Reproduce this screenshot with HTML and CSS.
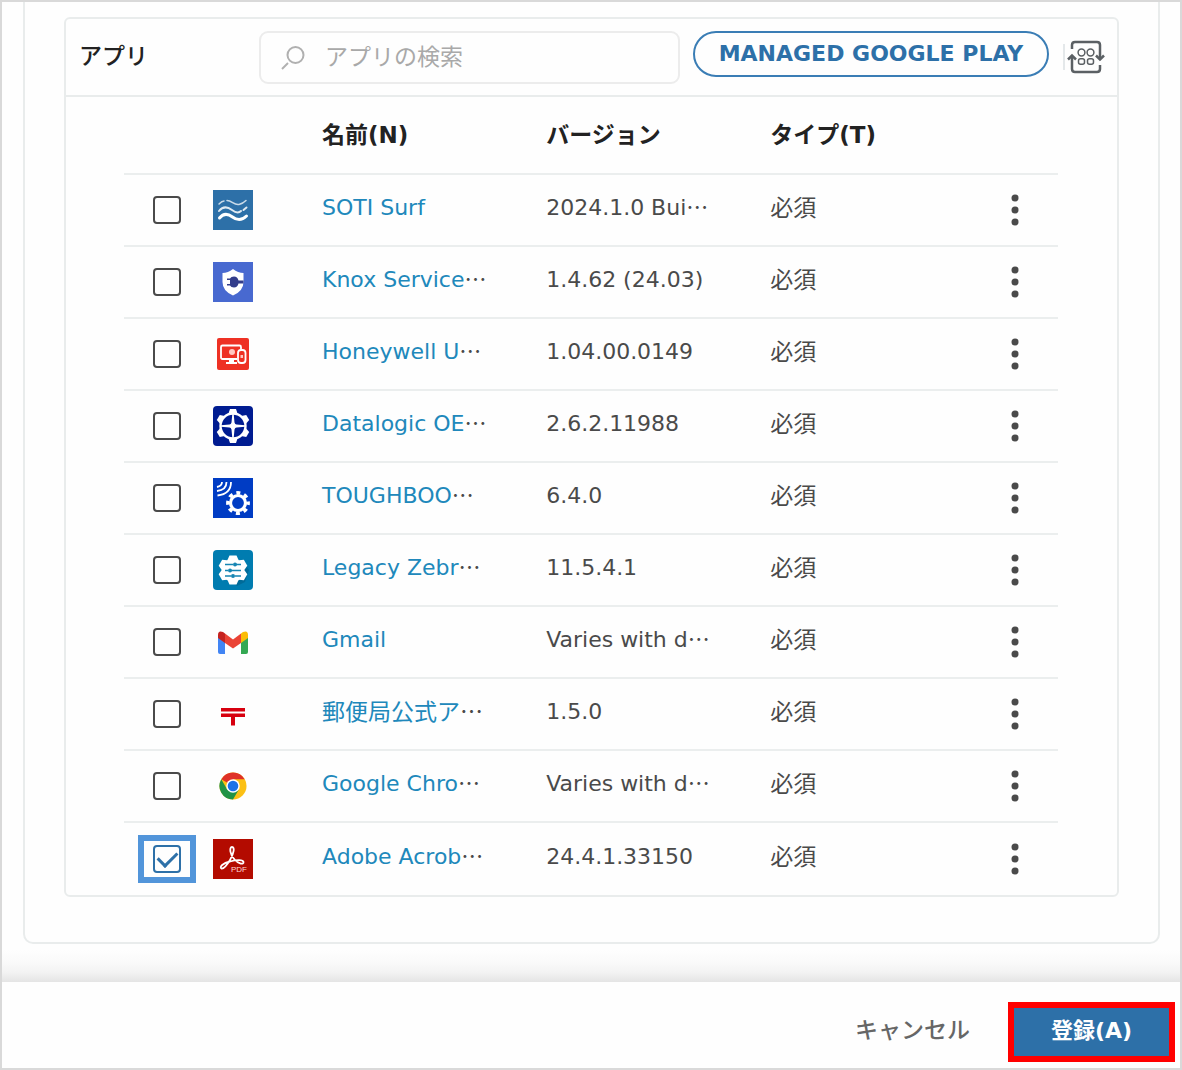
FILE: index.html
```html
<!DOCTYPE html>
<html lang="ja">
<head>
<meta charset="utf-8">
<meta name="viewport" content="width=device-width, initial-scale=1">
<title>アプリ</title>
<link rel="stylesheet" href="styles.css">
</head>
<body>
<svg class="sprite" aria-hidden="true">
  <symbol id="more" viewBox="0 0 10 32"><circle cx="5" cy="4" r="3.500"/><circle cx="5" cy="16" r="3.500"/><circle cx="5" cy="28" r="3.500"/></symbol>
</svg>
<main class="content">
  <div class="section">
    <section class="panel">
      <header class="toolbar">
        <h2 class="toolbar-title">アプリ</h2>
        <label class="search">
          <svg class="search-icon" viewBox="0 0 26 26" aria-hidden="true"><circle cx="15.500" cy="10" r="8"/><path d="M8 18l-6 6"/></svg>
          <input class="search-input" type="text" placeholder="アプリの検索" aria-label="アプリの検索">
        </label>
        <button class="play-button" type="button">MANAGED GOOGLE PLAY</button>
        <button class="sync-button" type="button" aria-label="同期">
          <svg class="sync-icon" viewBox="0 0 38 34" aria-hidden="true">
            <path d="M5 9V5q0-3 3-3h22q3 0 3 3v13M33 25v4q0 3-3 3H8q-3 0-3-3V16"/>
            <path d="M1 19.500L5 15.500l4 4M29 15.500l4 4 4-4"/>
            <g class="sync-dots"><circle cx="14.500" cy="12.500" r="3.400"/><circle cx="23.500" cy="12.500" r="3.400"/><rect x="11.500" y="18.800" width="6" height="5.500" rx="2"/><rect x="20.500" y="18.800" width="6" height="5.500" rx="2"/></g>
          </svg>
        </button>
      </header>
      <table class="apps">
        <colgroup><col class="col-check"><col class="col-icon"><col class="col-text"><col class="col-text"><col><col class="col-menu"></colgroup>
        <thead>
          <tr><th></th><th></th><th scope="col">名前(N)</th><th scope="col">バージョン</th><th scope="col">タイプ(T)</th><th></th></tr>
        </thead>
        <tbody>
          <tr>
            <td><label class="pick"><input type="checkbox" aria-label="SOTI Surf"></label></td>
            <td><svg class="app-icon" viewBox="0 0 40 40"><path fill="#2d70a8" d="M0 0h40v40H0z"/><g fill="none" stroke="#fff" stroke-linecap="round"><path stroke-width="1.500" opacity=".75" d="M6 14q3-3 5-3M14 10.500c5 0 7 5 12 4q4-1 7-4"/><path stroke-width="2" opacity=".85" d="M6 21c4-5 9-4 13-1s7 3 9 1M30.500 20l3-2.500"/><path stroke-width="3" d="M6.500 28c4-5 9-4 13-1s9 4 14-1"/></g></svg></td>
            <td><a href="#">SOTI Surf</a></td><td>2024.1.0 Bui<span class="more-text">…</span></td><td class="wide-text">必須</td>
            <td><button class="menu" type="button" aria-label="メニュー"><svg><use href="#more"/></svg></button></td>
          </tr>
          <tr>
            <td><label class="pick"><input type="checkbox" aria-label="Knox Service"></label></td>
            <td><svg class="app-icon" viewBox="0 0 40 40"><path fill="#4869d0" d="M0 0h40v40H0z"/><path fill="#fff" d="M20 7q5 4 10.500 4v9q0 9-10.500 13.500Q9.500 29 9.500 20v-9Q15 11 20 7z"/><path fill="#333d8b" d="M17 16.500q1-2 4-2 3.500 0 4.500 4h5v3h-5q-1 4-4.500 4-3 0-4-2h-3v-1.500h3v-4h-3v-1.500z"/></svg></td>
            <td><a href="#">Knox Service</a><span class="more-text">…</span></td><td>1.4.62 (24.03)</td><td class="wide-text">必須</td>
            <td><button class="menu" type="button" aria-label="メニュー"><svg><use href="#more"/></svg></button></td>
          </tr>
          <tr>
            <td><label class="pick"><input type="checkbox" aria-label="Honeywell U"></label></td>
            <td><svg class="app-icon" viewBox="0 0 40 40"><rect x="4" y="4" width="32" height="32" rx="2" fill="#ee3124"/><g fill="none" stroke="#fff" stroke-width="1.800"><path d="M24 25H9.500q-1.500 0-1.500-1.500V13q0-1.500 1.500-1.500h17q1.500 0 1.500 1.500v2"/><rect x="25" y="16" width="7.500" height="13" rx="3"/></g><path fill="#fff" d="M16 25h5v3h3v2H13v-2h3z"/><circle cx="19" cy="18" r="3" fill="#ffc8c2"/><path fill="#ffc8c2" d="M27.500 21h2.500v3h-2.500z"/></svg></td>
            <td><a href="#">Honeywell U</a><span class="more-text">…</span></td><td>1.04.00.0149</td><td class="wide-text">必須</td>
            <td><button class="menu" type="button" aria-label="メニュー"><svg><use href="#more"/></svg></button></td>
          </tr>
          <tr>
            <td><label class="pick"><input type="checkbox" aria-label="Datalogic OE"></label></td>
            <td><svg class="app-icon" viewBox="0 0 40 40"><rect width="40" height="40" rx="4" fill="#001c91"/><g fill="#fff"><g id="tooth"><path d="M15 9l2-6h6l2 6z"/><path d="M15 31l2 6h6l2-6z"/></g><use href="#tooth" transform="rotate(60 20 20)"/><use href="#tooth" transform="rotate(120 20 20)"/></g><circle cx="20" cy="20" r="12.500" fill="#001c91" stroke="#fff" stroke-width="2.400"/><path fill="#fff" d="M19.300 8h1.400l.8 8.500q.5 2 2 2l8.500.8v1.400l-8.500.8q-1.500 0-2 2l-.8 8.500h-1.400l-.8-8.500q-.5-2-2-2L8 20.700v-1.400l8.500-.8q1.500 0 2-2z"/></svg></td>
            <td><a href="#">Datalogic OE</a><span class="more-text">…</span></td><td>2.6.2.11988</td><td class="wide-text">必須</td>
            <td><button class="menu" type="button" aria-label="メニュー"><svg><use href="#more"/></svg></button></td>
          </tr>
          <tr>
            <td><label class="pick"><input type="checkbox" aria-label="TOUGHBOO"></label></td>
            <td><svg class="app-icon" viewBox="0 0 40 40"><path fill="#003cc4" d="M0 0h40v40H0z"/><g fill="none" stroke="#fff"><path stroke-width="1.800" d="M9 4q0 4-5 5M13.500 4q0 8-9.500 9M18 4q0 12-13.500 13.500"/><circle cx="25" cy="25" r="7.500" stroke-width="3.200"/><circle cx="25" cy="25" r="10.200" stroke-width="3.400" stroke-dasharray="4.006 4.006" stroke-dashoffset="2.003"/></g></svg></td>
            <td><a href="#">TOUGHBOO</a><span class="more-text">…</span></td><td>6.4.0</td><td class="wide-text">必須</td>
            <td><button class="menu" type="button" aria-label="メニュー"><svg><use href="#more"/></svg></button></td>
          </tr>
          <tr>
            <td><label class="pick"><input type="checkbox" aria-label="Legacy Zebr"></label></td>
            <td><svg class="app-icon" viewBox="0 0 40 40"><rect width="40" height="40" rx="4" fill="#007cb0"/><path fill="#006b99" d="M32 14l4 6-4 12-8 4-6-4z"/><g fill="#fff"><circle cx="20" cy="20" r="11.500"/><g id="tooth-wide"><path d="M14.500 10l2-4.500h7l2 4.500z"/><path d="M14.500 30l2 4.500h7l2-4.500z"/></g><use href="#tooth-wide" transform="rotate(60 20 20)"/><use href="#tooth-wide" transform="rotate(120 20 20)"/></g><g stroke="#1685b3" stroke-width="1.600"><path d="M12 14.500h8M23 14.500h5M12 20.500h3M17 20.500h11M12 26h6M22 26h6"/></g><g fill="#1685b3"><circle cx="22" cy="14.500" r="2"/><circle cx="17" cy="20.500" r="2"/><circle cx="20" cy="26" r="2"/></g></svg></td>
            <td><a href="#">Legacy Zebr</a><span class="more-text">…</span></td><td>11.5.4.1</td><td class="wide-text">必須</td>
            <td><button class="menu" type="button" aria-label="メニュー"><svg><use href="#more"/></svg></button></td>
          </tr>
          <tr>
            <td><label class="pick"><input type="checkbox" aria-label="Gmail"></label></td>
            <td><svg class="app-icon" viewBox="0 0 40 40"><path fill="#4285f4" d="M5 14l7 5v13H7q-2 0-2-2z"/><path fill="#34a853" d="M28 19l7-5v16q0 2-2 2h-5z"/><path fill="#fbbc04" d="M28 11.500l2-1.500q5-2 5 3v3l-7 5z"/><path fill="#ea4335" d="M12 11.500l8 6 8-6V21l-8 5.500L12 21z"/><path fill="#c5221f" d="M5 13q0-5 5-3l2 1.500V21l-7-5z"/></svg></td>
            <td><a href="#">Gmail</a></td><td>Varies with d<span class="more-text">…</span></td><td class="wide-text">必須</td>
            <td><button class="menu" type="button" aria-label="メニュー"><svg><use href="#more"/></svg></button></td>
          </tr>
          <tr>
            <td><label class="pick"><input type="checkbox" aria-label="郵便局公式ア"></label></td>
            <td><svg class="app-icon" viewBox="0 0 40 40"><path fill="#d7000f" d="M8 14h24v3.500H8zM8 19.500h24V23H22v8.500h-4V23H8z"/></svg></td>
            <td class="wide-text"><a href="#">郵便局公式ア</a><span class="more-text">…</span></td><td>1.5.0</td><td class="wide-text">必須</td>
            <td><button class="menu" type="button" aria-label="メニュー"><svg><use href="#more"/></svg></button></td>
          </tr>
          <tr>
            <td><label class="pick"><input type="checkbox" aria-label="Google Chro"></label></td>
            <td><svg class="app-icon" viewBox="0 0 40 40"><circle cx="20" cy="20" r="13.500" fill="#fcc014"/><path fill="#df3127" d="M20 20L8.300 13.250A13.500 13.500 0 0 1 31.700 13.250H20z"/><path fill="#219346" d="M8.300 13.250A13.500 13.500 0 0 0 20 33.500l5.850-10.100L14.150 23.400z"/><circle cx="20" cy="20" r="6.750" fill="#fff"/><circle cx="20" cy="20" r="5.300" fill="#1a73e8"/></svg></td>
            <td><a href="#">Google Chro</a><span class="more-text">…</span></td><td>Varies with d<span class="more-text">…</span></td><td class="wide-text">必須</td>
            <td><button class="menu" type="button" aria-label="メニュー"><svg><use href="#more"/></svg></button></td>
          </tr>
          <tr>
            <td><label class="pick pick-marked"><input type="checkbox" checked aria-label="Adobe Acrob"></label></td>
            <td><svg class="app-icon" viewBox="0 0 40 40"><path fill="#b30b00" d="M0 0h40v40H0z"/><path fill="none" stroke="#fff" stroke-width="1.800" stroke-linejoin="round" d="M19 8c3 0 2 6-2 13-3 5-6 9-8.500 8.500C6 28 10 24 17 22.500c7-2 13-2 13.500.5.500 3-5 2-9-2.500C17 16 16 8 19 8z"/><text class="pdf-label" x="18" y="33">PDF</text></svg></td>
            <td><a href="#">Adobe Acrob</a><span class="more-text">…</span></td><td>24.4.1.33150</td><td class="wide-text">必須</td>
            <td><button class="menu" type="button" aria-label="メニュー"><svg><use href="#more"/></svg></button></td>
          </tr>
        </tbody>
      </table>
    </section>
  </div>
</main>
<footer class="actions">
  <button class="cancel" type="button">キャンセル</button>
  <button class="submit" type="submit">登録(A)</button>
</footer>
</body>
</html>
```
FILE: styles.css
```css
* { box-sizing: border-box; }

body {
  margin: 0;
  min-height: 100vh;
  display: flex;
  flex-direction: column;
  border: 2px solid #d9d9d9;
  background: #fefefe;
  color: #4a4a4a;
  font-family: "DejaVu Sans", "Noto Sans CJK JP", sans-serif;
  font-size: 22px;
  line-height: 32px;
}

button, input { font: inherit; }
button { cursor: pointer; }

.sprite { display: none; }

.content {
  flex: 1;
  padding: 0 20px 36px 21px;
  background: linear-gradient(to top, #e4e4e4, #f3f3f3 10px, #fafafa 20px, #fefefe 32px);
}

.section {
  padding: 15px 39px 45px;
  border: 2px solid #e9ecec;
  border-top: 0;
  border-radius: 0 0 10px 10px;
  background: #fefefe;
}

.panel {
  border: 2px solid #e9ecec;
  border-radius: 6px;
}

.toolbar {
  display: flex;
  align-items: flex-start;
  height: 78px;
  padding: 12px 12px 0 13px;
  border-bottom: 2px solid #e9ecec;
}

.toolbar-title {
  width: 180px;
  margin: 0;
  color: #222;
  font-size: 23px;
  font-weight: 500;
  line-height: 50px;
}

.search {
  flex: 1;
  min-width: 0;
  display: flex;
  align-items: center;
  gap: 19px;
  height: 53px;
  margin-right: 13px;
  padding: 0 19px;
  border: 2px solid #ececec;
  border-radius: 9px;
}

.search-icon {
  flex: none;
  width: 26px;
  height: 26px;
  fill: none;
  stroke: #b0b0b0;
  stroke-width: 2;
}

.search-input {
  flex: 1;
  min-width: 0;
  height: 48px;
  padding: 0 0 2px;
  border: 0;
  outline: 0;
  background: none;
  color: #4a4a4a;
  font-size: 23px;
}

.search-input::placeholder { color: #a9a9a9; }

.play-button {
  width: 356px;
  height: 46px;
  padding: 0;
  border: 2px solid #3a7db5;
  border-radius: 23px;
  background: #fefefe;
  color: #2d70a8;
  font-weight: bold;
  white-space: nowrap;
}

.sync-button {
  display: flex;
  align-items: center;
  height: 26px;
  margin: 13px 0 0 14px;
  padding: 0 0 0 2px;
  border: 0;
  border-left: 2px solid #e4e8ea;
  background: none;
}

.sync-icon {
  width: 38px;
  height: 34px;
  fill: none;
  stroke: #5b6064;
  stroke-width: 2.5;
}

.sync-dots { stroke-width: 1.5; }

.apps {
  width: calc(100% - 117px);
  margin-left: 58px;
  border-collapse: separate;
  border-spacing: 0;
  table-layout: fixed;
}

.col-check { width: 72px; }
.col-icon { width: 99px; }
.col-text { width: 24%; }
.col-menu { width: 104px; }

.apps th {
  height: 78px;
  padding: 0 0 0 27px;
  border-bottom: 2px solid #ebeeee;
  color: #222;
  font-size: 23px;
  font-weight: bold;
  text-align: left;
}

.apps td {
  height: 72px;
  padding: 0 0 4px 27px;
  border-bottom: 2px solid #ebeeee;
  white-space: nowrap;
}

.apps tbody tr:last-child td { border-bottom: 0; }

.apps td:nth-child(1) { padding: 0 0 0 14px; }
.apps td:nth-child(2) { padding: 0 0 0 17px; }
.apps td:nth-child(6) { padding: 0 0 0 46px; }

.apps .wide-text { font-size: 23px; }

.apps a {
  color: #2088bb;
  text-decoration: none;
}

.more-text { font-family: "Noto Sans CJK JP", sans-serif; line-height: 1; }

.pick {
  display: flex;
  align-items: center;
  justify-content: center;
  width: 58px;
  height: 48px;
  border: 6px solid transparent;
}

.pick-marked { border-color: #5295da; }

.pick input {
  appearance: none;
  width: 28px;
  height: 28px;
  margin: 0;
  border: 2px solid #4a4a4a;
  border-radius: 4px;
  background: #fefefe;
}

.pick input:checked {
  display: grid;
  place-items: center;
  border-color: #2d70a8;
}

.pick input:checked::before {
  content: "";
  width: 16px;
  height: 9px;
  margin-bottom: 5px;
  border: solid #2d70a8;
  border-width: 0 0 3px 3px;
  transform: rotate(-45deg);
}

.app-icon {
  display: block;
  width: 40px;
  height: 40px;
}

.pdf-label {
  fill: #ffd9d6;
  font-family: "Liberation Sans", sans-serif;
  font-size: 8px;
}

.menu {
  display: flex;
  align-items: center;
  justify-content: center;
  width: 30px;
  height: 40px;
  padding: 0;
  border: 0;
  background: none;
}

.menu svg {
  width: 10px;
  height: 32px;
  fill: #4a4a4a;
}

.actions {
  display: flex;
  align-items: center;
  justify-content: flex-end;
  padding: 20px 5px 6px;
  background: #fefefe;
}

.cancel {
  margin-right: 22px;
  padding: 0 16px 4px;
  border: 0;
  background: none;
  color: #666;
  font-size: 23px;
  font-weight: 500;
}

.submit {
  width: 167px;
  height: 60px;
  padding: 0 0 2px;
  border: 6px solid #f00;
  background: #2d70a8;
  color: #fefefe;
  font-weight: bold;
}
```
